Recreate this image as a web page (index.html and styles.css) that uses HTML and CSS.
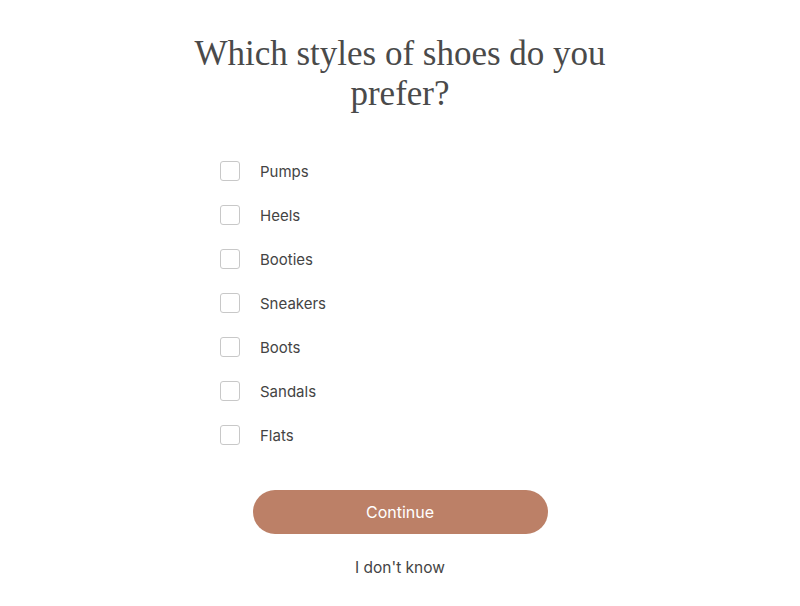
FILE: index.html
```html
<!DOCTYPE html>
<html>
<head>
<meta charset="utf-8">
<link rel="stylesheet" href="styles.css">
</head>
<body>
<main class="page">
  <h1 class="title">Which styles of shoes do you prefer?</h1>
  <ul class="options">
    <li class="option"><span class="box"></span><span class="label">Pumps</span></li>
    <li class="option"><span class="box"></span><span class="label">Heels</span></li>
    <li class="option"><span class="box"></span><span class="label">Booties</span></li>
    <li class="option"><span class="box"></span><span class="label">Sneakers</span></li>
    <li class="option"><span class="box"></span><span class="label">Boots</span></li>
    <li class="option"><span class="box"></span><span class="label">Sandals</span></li>
    <li class="option"><span class="box"></span><span class="label">Flats</span></li>
  </ul>
  <button class="continue">Continue</button>
  <a class="unsure">I don't know</a>
</main>
</body>
</html>
```
FILE: styles.css
```css
html, body {
  margin: 0;
  padding: 0;
  background: #fff;
}
.page {
  display: flex;
  flex-direction: column;
  align-items: center;
  padding-top: 34px;
  font-family: "Inter", "Liberation Sans", sans-serif;
  color: #444;
}
.title {
  margin: 0;
  width: 440px;
  text-align: center;
  font-family: "Liberation Serif", serif;
  font-weight: 400;
  font-size: 35px;
  line-height: 40px;
  color: #4a4a4a;
}
.options {
  list-style: none;
  margin: 47px 0 0;
  padding: 0;
  width: 360px;
  display: flex;
  flex-direction: column;
  gap: 24px;
}
.option {
  display: flex;
  align-items: center;
  height: 20px;
}
.box {
  width: 18px;
  height: 18px;
  border: 1px solid #c8c8c8;
  border-radius: 3px;
  box-sizing: content-box;
}
.label {
  margin-left: 20px;
  font-size: 15px;
  color: #444;
}
.continue {
  margin-top: 45px;
  width: 295px;
  height: 44px;
  border: none;
  border-radius: 22px;
  background: #bc8067;
  color: #fff;
  font-family: "Inter", "Liberation Sans", sans-serif;
  font-size: 16px;
}
.unsure {
  margin-top: 24px;
  font-size: 15.5px;
  color: #444;
}
```
